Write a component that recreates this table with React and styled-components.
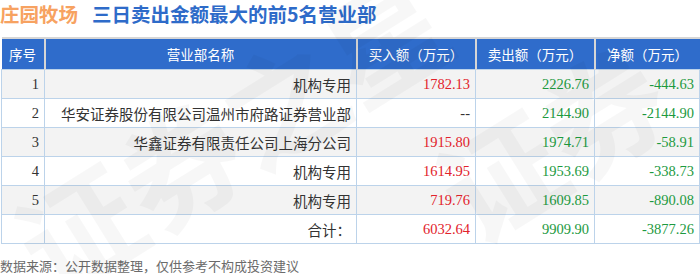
import React from "react";
import styled, { createGlobalStyle } from "styled-components";

const Global = createGlobalStyle`
  html, body { margin: 0; padding: 0; background: #fff; }
  body { width: 700px; height: 274px; overflow: hidden; }
`;

const Page = styled.div`
  position: relative;
  width: 700px;
  height: 274px;
  overflow: hidden;
  font-family: "Noto Sans CJK SC", "Noto Sans", sans-serif;
`;

const Title = styled.div`
  display: flex;
  align-items: center;
  gap: 14px;
  height: 27px;
  font-size: 19.5px;
  font-weight: 700;
  line-height: 27px;
`;

const Stock = styled.span`
  color: #f7a261;
`;

const Heading = styled.span`
  color: #2e6bc9;
`;

const Table = styled.table`
  margin: 10px 0 0 1px;
  width: 698px;
  border-collapse: collapse;
  table-layout: fixed;
  border-top: 2px solid #d6d6d6;
  position: relative;
  z-index: 0;
`;

const Th = styled.th`
  height: 30px;
  padding: 0;
  background: #2f6ccb;
  color: #fff;
  font-weight: 400;
  font-size: 13.5px;
  text-align: center;
  border-left: 2px solid #d6d6d6;
  border-right: 2px solid #d6d6d6;
  &:first-child { border-left: none; }
  &:last-child { border-right: none; }
`;

const Tr = styled.tr`
  height: 29px;
  background: ${(p) => (p.$shade ? "#f3f3f3" : "#fff")};
`;

const Td = styled.td`
  padding: 0 5px 0 0;
  border: 1px solid #bcd3ea;
  text-align: right;
  font-size: 14.5px;
  font-family: ${(p) => (p.$cjk ? '"Noto Sans CJK SC", sans-serif' : '"Liberation Serif", "Noto Sans CJK SC", serif')};
  color: ${(p) => p.$color || "#333"};
  white-space: nowrap;
`;

const Footer = styled.div`
  margin-top: 12px;
  font-size: 13px;
  color: #6b6b6b;
  line-height: 19px;
`;

const Watermark = styled.div`
  position: absolute;
  left: ${(p) => p.$x}px;
  top: ${(p) => p.$y}px;
  font-size: 120px;
  font-weight: 700;
  line-height: 1;
  color: rgba(0, 0, 0, 0.03);
  transform: rotate(-32deg);
  white-space: nowrap;
  pointer-events: none;
  z-index: 1;
  font-family: "Noto Sans CJK SC", sans-serif;
`;

const RED = "#e2222b";
const GREEN = "#1d9a3f";

const rows = [
  ["1", "机构专用", "1782.13", "2226.76", "-444.63"],
  ["2", "华安证券股份有限公司温州市府路证券营业部", "--", "2144.90", "-2144.90"],
  ["3", "华鑫证券有限责任公司上海分公司", "1915.80", "1974.71", "-58.91"],
  ["4", "机构专用", "1614.95", "1953.69", "-338.73"],
  ["5", "机构专用", "719.76", "1609.85", "-890.08"],
  ["", "合计：", "6032.64", "9909.90", "-3877.26"],
];

export default function App() {
  return (
    <Page>
      <Global />
      <Title>
        <Stock>庄园牧场</Stock>
        <Heading>三日卖出金额最大的前5名营业部</Heading>
      </Title>
      <Table>
        <colgroup>
          <col style={{ width: 43 }} />
          <col style={{ width: 312 }} />
          <col style={{ width: 119 }} />
          <col style={{ width: 119 }} />
          <col style={{ width: 105 }} />
        </colgroup>
        <thead>
          <tr>
            <Th>序号</Th>
            <Th>营业部名称</Th>
            <Th>买入额（万元）</Th>
            <Th>卖出额（万元）</Th>
            <Th>净额（万元）</Th>
          </tr>
        </thead>
        <tbody>
          {rows.map((r, i) => (
            <Tr key={i} $shade={i % 2 === 0 && i < 5}>
              <Td>{r[0]}</Td>
              <Td $cjk>{r[1]}</Td>
              <Td $color={r[2] === "--" ? "#333" : RED}>{r[2]}</Td>
              <Td $color={GREEN}>{r[3]}</Td>
              <Td $color={GREEN}>{r[4]}</Td>
            </Tr>
          ))}
        </tbody>
      </Table>
      <Footer>数据来源：公开数据整理，仅供参考不构成投资建议</Footer>
      <Watermark $x={-10} $y={70} aria-hidden="true">证券之星</Watermark>
      <Watermark $x={430} $y={80} aria-hidden="true">证券</Watermark>
    </Page>
  );
}
